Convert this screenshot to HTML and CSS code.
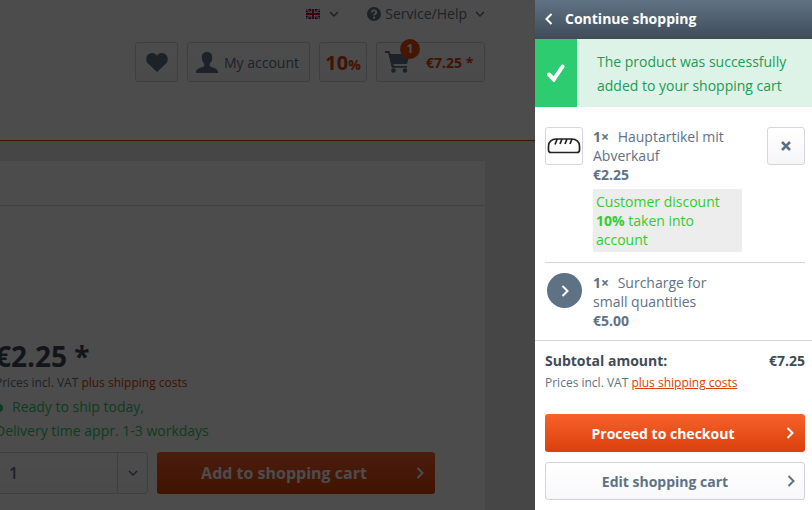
FILE: index.html
```html
<!DOCTYPE html>
<html lang="en">
<head>
<meta charset="utf-8">
<title>Shopping cart</title>
<link rel="stylesheet" href="styles.css">
</head>
<body>
<div class="shop">
  <header class="shop-header">
    <nav class="topbar">
      <button class="plain language" aria-label="Language">
        <svg class="flag" viewBox="0 0 28 20"><path fill="#10106c" d="M0 0h28v20H0z"/><path stroke="#fff" stroke-width="4" d="M0 0l28 20M28 0L0 20"/><path stroke="#d01030" stroke-width="1.6" d="M0 0l28 20M28 0L0 20"/><path stroke="#fff" stroke-width="7" d="M14 0v20M0 10h28"/><path stroke="#d01030" stroke-width="4" d="M14 0v20M0 10h28"/></svg>
        <svg class="chevron" viewBox="0 0 10 10"><path d="M1 3l4 4 4-4"/></svg>
      </button>
      <button class="plain service">
        <svg class="help" viewBox="0 0 14 14"><circle cx="7" cy="7" r="7" fill="#5f7285"/><path fill="none" stroke="#fff" stroke-width="1.8" d="M4.8 5.5C4.8 2.6 9.3 2.7 9.3 5.2 9.3 6.7 7.1 6.8 7.1 8.6"/><circle cx="7.1" cy="10.7" r="1.1" fill="#fff"/></svg>
        <span>Service/Help</span>
        <svg class="chevron" viewBox="0 0 10 10"><path d="M1 3l4 4 4-4"/></svg>
      </button>
    </nav>
    <div class="actions">
      <a class="tile wish" href="#wishlist" aria-label="Wish list"><svg class="heart" viewBox="0 0 22 19"><path d="M11 19L2 10.5C-1.500 7 .5 0 6 0c2.500 0 4 1.200 5 2.800C12 1.200 13.500 0 16 0c5.500 0 7.500 7 4 10.500z"/></svg></a>
      <a class="tile account" href="#account"><svg class="person" viewBox="0 0 22 21"><path d="M11 0c3.600 0 5.500 2.300 5.200 6-.2 2.700-1.200 4.500-2.500 5.800v2.400c1.600 1.200 7.800 2 8.300 5.200V21H0v-1.600c.5-3.200 6.700-4 8.300-5.200v-2.400C7 10.500 6 8.700 5.800 6 5.500 2.300 7.400 0 11 0z"/></svg>My account</a>
      <a class="tile discount" href="#offers">10<small>%</small></a>
      <a class="tile basket" href="#cart"><svg class="trolley" viewBox="0 0 25 22"><path d="M0 0h4.500l1 3H25l-3 10H8.400l.5 2H22v1.800H6.800L3.200 2H0z"/><circle cx="8.500" cy="19.500" r="2.300"/><circle cx="20" cy="19.500" r="2.300"/></svg><span class="badge">1</span>€7.25 *</a>
    </div>
  </header>
  <main class="product">
    <div class="product-title"></div>
    <div class="buybox">
      <p class="price">€2.25 *</p>
      <p class="tax">Prices incl. VAT <a href="#shipping">plus shipping costs</a></p>
      <p class="delivery"><span class="dot"></span>Ready to ship today,<br>Delivery time appr. 1-3 workdays</p>
      <form class="buy">
        <div class="quantity">
          <select aria-label="Quantity"><option>1</option><option>2</option></select>
          <span class="arrow"><svg class="chevron" viewBox="0 0 10 10"><path d="M1 3l4 4 4-4"/></svg></span>
        </div>
        <button class="button primary add" type="button"><span>Add to shopping cart</span><svg class="next" viewBox="0 0 8 12"><path d="M1.500 1l5 5-5 5"/></svg></button>
      </form>
    </div>
  </main>
  <div class="overlay"></div>
</div>
<aside class="drawer">
  <button class="continue"><svg class="next" viewBox="0 0 8 12"><path d="M6.500 1l-5 5 5 5"/></svg>Continue shopping</button>
  <div class="notice" role="status">
    <div class="notice-icon"><svg viewBox="0 0 18 18"><path d="M2 10.500l4.800 5L15.500 2.500"/></svg></div>
    <p>The product was successfully added to your shopping cart</p>
  </div>
  <ul class="items">
    <li class="item">
      <a class="thumb" href="#article" aria-label="Hauptartikel mit Abverkauf"><svg viewBox="0 0 34 18"><path d="M4 15.500h26q2.500 0 2.500-2.500V9C32.500 4.500 29 2 25 2H9C5 2 1.500 4.500 1.500 9v4q0 2.500 2.500 2.500zM8 7.500l2-5M13 7l2-5M18 7l2-5M23 7l2-5"/></svg></a>
      <div class="details">
        <a class="name" href="#article"><b>1×</b> Hauptartikel mit Abverkauf</a>
        <b class="amount">€2.25</b>
        <p class="saving">Customer discount <b>10%</b> taken into account</p>
      </div>
      <button class="remove" aria-label="Remove"><svg viewBox="0 0 10 10"><path d="M1 1l8 8M9 1L1 9"/></svg></button>
    </li>
    <li class="item">
      <span class="round"><svg class="next" viewBox="0 0 8 12"><path d="M1.500 1l5 5-5 5"/></svg></span>
      <div class="details">
        <span class="name"><b>1×</b> Surcharge for small quantities</span>
        <b class="amount">€5.00</b>
      </div>
    </li>
  </ul>
  <div class="summary">
    <div class="subtotal"><span>Subtotal amount:</span><span>€7.25</span></div>
    <p class="tax">Prices incl. VAT <a href="#shipping">plus shipping costs</a></p>
    <a class="button primary" href="#checkout"><span>Proceed to checkout</span><svg class="next" viewBox="0 0 8 12"><path d="M1.500 1l5 5-5 5"/></svg></a>
    <a class="button secondary" href="#edit"><span>Edit shopping cart</span><svg class="next" viewBox="0 0 8 12"><path d="M1.500 1l5 5-5 5"/></svg></a>
  </div>
</aside>
</body>
</html>
```
FILE: styles.css
```css
* { box-sizing: border-box; }
body {
  margin: 0;
  min-height: 100vh;
  display: flex;
  overflow: hidden;
  font: 14px/19px "Open Sans", sans-serif;
  color: #5f7285;
}
p, ul { margin: 0; padding: 0; }
a { color: inherit; text-decoration: none; }
button, select { font: inherit; color: inherit; }
svg { flex: none; fill: none; stroke: currentColor; stroke-width: 2; }

.shop {
  position: relative;
  flex: 1;
  min-width: 0;
  display: flex;
  flex-direction: column;
  overflow: hidden;
  background: #ebe9ef;
}
.overlay { position: absolute; inset: 0; background: rgba(0, 0, 0, .7); }
.shop-header {
  height: 141px;
  padding-right: 50px;
  background: #fff;
  border-bottom: 1px solid #d9400b;
}
.topbar { display: flex; justify-content: flex-end; gap: 28px; padding-top: 4px; }
.plain { display: flex; align-items: center; border: 0; padding: 0; background: none; }
.language { gap: 9px; }
.flag { width: 14px; height: 10px; stroke: none; }
.chevron { width: 10px; height: 10px; stroke-width: 1.5; }
.help { width: 14px; height: 14px; stroke: none; margin-right: 4px; }
.service .chevron { margin-left: 8px; }
.actions { display: flex; justify-content: flex-end; gap: 9px; padding-top: 19px; }
.tile {
  position: relative;
  display: flex;
  align-items: center;
  justify-content: center;
  height: 40px;
  border: 1px solid #d0d3dd;
  border-radius: 3px;
  background: linear-gradient(#fff, #f8f8fa);
}
.tile svg { fill: currentColor; stroke: none; }
.wish { width: 43px; }
.heart { width: 22px; height: 19px; }
.account { width: 123px; gap: 6px; padding-right: 2px; }
.person { width: 22px; height: 21px; }
.discount { width: 48px; font-size: 20px; font-weight: 700; color: #d9400b; }
.discount small { font-size: 14px; padding-top: 4px; }
.basket { width: 109px; justify-content: flex-start; padding-left: 8px; gap: 16px; font-weight: 700; color: #d9400b; }
.trolley { width: 25px; height: 22px; color: #5f7285; }
.badge {
  position: absolute;
  left: 23px;
  top: -4px;
  width: 20px;
  height: 20px;
  border-radius: 50%;
  background: #e74c10;
  color: #fff;
  font-size: 12px;
  line-height: 20px;
  text-align: center;
}
.product {
  flex: 1;
  margin: 20px 50px 0 -8px;
  background: #fff;
}
.product-title { height: 45px; border-bottom: 1px solid #dadae5; }
.buybox { padding: 132px 50px 0 3px; }
.price { font-size: 28px; line-height: 36px; font-weight: 700; color: #3f4c58; }
.tax { font-size: 12px; line-height: 18px; }
.tax a { color: #d9400b; }
.delivery { padding: 3px 0 9px; line-height: 24px; color: #2ecc71; }
.dot { display: inline-block; width: 8px; height: 8px; margin-right: 9px; border-radius: 50%; background: #2ecc71; }
.buy { display: flex; gap: 9px; }
.quantity {
  display: flex;
  width: 153px;
  height: 42px;
  border: 1px solid #d0d3dd;
  border-radius: 3px;
  background: linear-gradient(#fff, #f8f8fa);
}
.quantity select { flex: 1; appearance: none; border: 0; padding: 0 13px; background: none; font-size: 16px; font-weight: 600; }
.arrow { display: grid; place-items: center; width: 30px; border-left: 1px solid #d0d3dd; }
.button {
  display: flex;
  align-items: center;
  height: 38px;
  padding: 0 11px;
  border: 0;
  border-radius: 3px;
  font-weight: 700;
  text-align: center;
}
.button span { flex: 1; padding-right: 16px; }
.next { width: 8px; height: 12px; }
.primary { color: #fff; background: linear-gradient(#f9612b, #d9400b); }
.add { flex: 1; height: 42px; font-size: 16px; }

.drawer { width: 277px; background: #fff; }
.continue {
  display: flex;
  align-items: center;
  gap: 12px;
  width: 100%;
  height: 39px;
  padding: 0 10px 2px;
  border: 0;
  color: #fff;
  font-weight: 700;
  background: linear-gradient(#5f7285, #3f4c58);
}
.notice { display: flex; height: 68px; background: #def3e7; color: #239a55; line-height: 24px; }
.notice-icon { display: grid; place-items: center; width: 42px; background: #2ecc71; color: #fff; }
.notice-icon svg { width: 18px; height: 18px; stroke-width: 4; stroke-linecap: round; }
.notice p { flex: 1; padding: 11px 20px 0; }
.items { list-style: none; padding: 10px 7px 0 10px; }
.item { display: flex; align-items: flex-start; padding: 10px 0; }
.item + .item { border-top: 1px solid #d5d5d5; }
.thumb, .remove {
  display: grid;
  place-items: center;
  width: 38px;
  height: 38px;
  padding: 0;
  border: 1px solid #d5d7de;
  border-radius: 3px;
  background: #fff;
}
.thumb svg { width: 34px; height: 18px; color: #222; stroke-width: 1.7; }
.details { width: 149px; margin: 0 25px 0 10px; }
.name { display: block; }
.name b { margin-right: 5px; }
.amount { display: block; }
.saving { margin-top: 5px; padding: 3px; background: #ededed; color: #32cd32; }
.remove { background: linear-gradient(#fff, #f6f6f9); }
.remove svg { width: 10px; height: 10px; stroke-width: 2.5; }
.round {
  display: grid;
  place-items: center;
  width: 35px;
  height: 35px;
  margin: 0 1px 0 2px;
  border-radius: 50%;
  background: #5f7285;
  color: #fff;
}
.summary { padding: 10px 7px 10px 10px; border-top: 1px solid #d5d5d5; }
.subtotal { display: flex; justify-content: space-between; font-weight: 700; color: #3f4c58; }
.summary .tax { padding: 4px 0 22px; }
.summary .tax a { text-decoration: underline; }
.secondary { margin-top: 10px; padding: 0 9px; border: 1px solid #d0d3dd; background: linear-gradient(#fff, #f8f8fa); }
.secondary span { padding-right: 12px; }
```
